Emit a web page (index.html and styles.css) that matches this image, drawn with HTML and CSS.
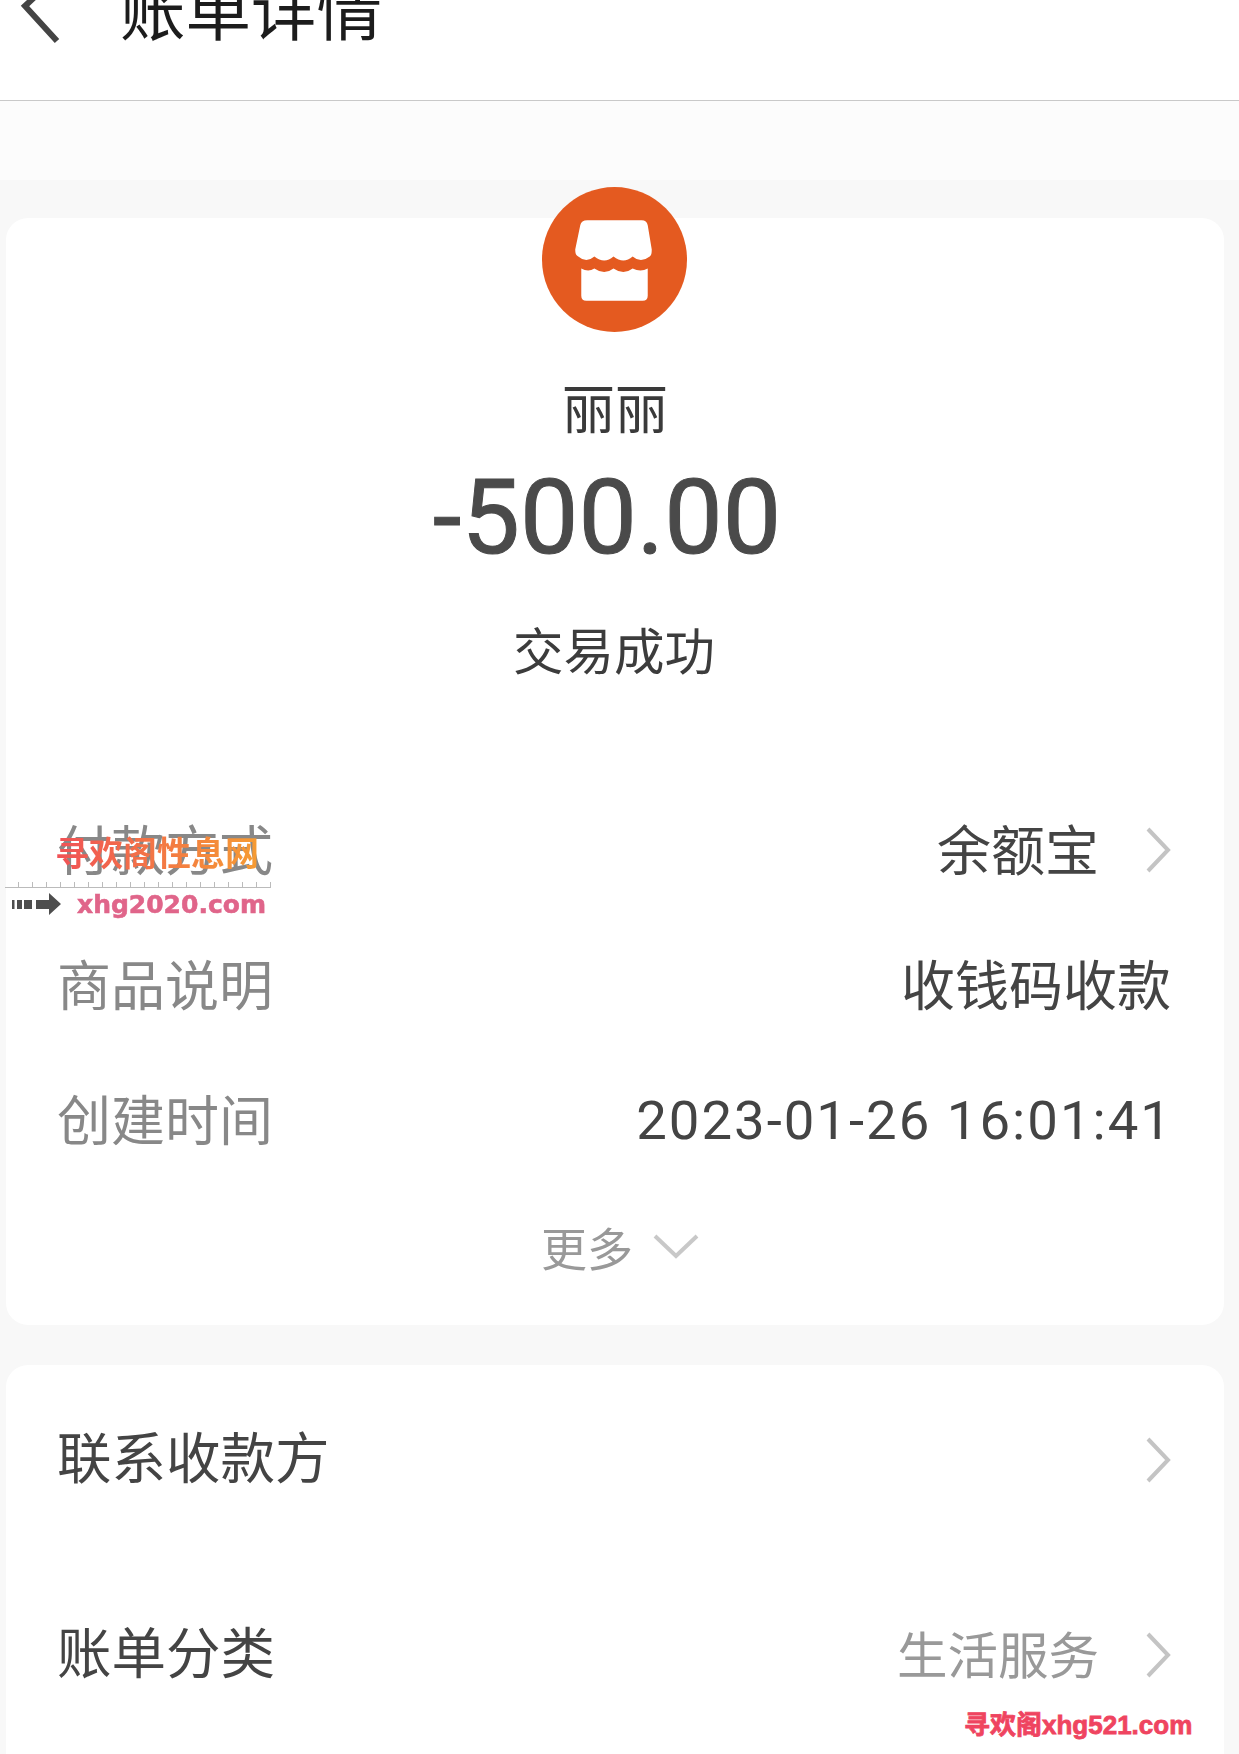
FILE: index.html
```html
<!DOCTYPE html>
<html lang="zh-CN">
<head>
  <meta charset="UTF-8" />
  <meta name="viewport" content="width=device-width, initial-scale=1.0" />
  <title>账单详情</title>
  <link rel="stylesheet" href="styles.css">
</head>
<body>
  <div class="page">
    <header class="topbar">
      <svg class="back" viewBox="0 0 40 70" aria-hidden="true"><path d="M37 2 L5 32 L37 67" /></svg>
      <h1>账单详情</h1>
    </header>
    <div class="band"></div>

    <main class="content">
      <section class="card card-main">
        <div class="avatar">
          <svg viewBox="0 0 144 144" aria-hidden="true">
            <circle cx="72" cy="72" r="72" fill="#e45a20" />
            <path fill="#fff" d="M45 33 H99 Q104 33 105 38 L109 62 Q109 68 107 69 Q98 76 90 69 Q81 77 71 69 Q62 77 52 69 Q44 76 36 69 Q33 68 33 62 L38 38 Q39 33 45 33 Z" />
            <path fill="#fff" d="M39 81 Q46 85 52 81 Q62 88 71 81 Q81 88 90 81 Q98 85 105 81 V108 Q105 113 100 113 H44 Q39 113 39 108 Z" />
          </svg>
        </div>
        <div class="payee">丽丽</div>
        <div class="amount">-500.00</div>
        <div class="status">交易成功</div>

        <div class="rows">
          <div class="row">
            <span class="label">付款方式</span>
            <span class="value with-arrow">余额宝
              <svg class="chevron chevron-low" viewBox="0 0 26 46" aria-hidden="true"><path d="M3 2 L23 23 L3 44" /></svg>
            </span>
          </div>
          <div class="row">
            <span class="label">商品说明</span>
            <span class="value">收钱码收款</span>
          </div>
          <div class="row">
            <span class="label">创建时间</span>
            <span class="value date">2023-01-26 16:01:41</span>
          </div>
        </div>

        <div class="more">更多
          <svg class="chevron-down" viewBox="0 0 46 26" aria-hidden="true"><path d="M2 3 L23 23 L44 3" /></svg>
        </div>
      </section>

      <section class="card card-links">
        <div class="link-row">
          <span class="title">联系收款方</span>
          <svg class="chevron" viewBox="0 0 26 46" aria-hidden="true"><path d="M3 2 L23 23 L3 44" /></svg>
        </div>
        <div class="link-row">
          <span class="title">账单分类</span>
          <span class="value muted with-arrow"><span class="muted-text">生活服务</span>
            <svg class="chevron" viewBox="0 0 26 46" aria-hidden="true"><path d="M3 2 L23 23 L3 44" /></svg>
          </span>
        </div>
      </section>
    </main>

    <!-- watermarks stamped over the screenshot -->
    <div class="stamp">
      <div class="stamp-cn">寻欢阁性息网</div>
      <div class="stamp-rule"></div>
      <div class="stamp-url">
        <svg class="stamp-arrow" viewBox="0 0 50 22" aria-hidden="true">
          <path d="M0 7 H2.500 V16 H0 Z M5 7 H10 V16 H5 Z M12 7 H20 V16 H12 Z M24 7 H37 V0 L49 11 L37 22 V16 H24 Z" />
        </svg>
        <span>xhg2020.com</span>
      </div>
    </div>
    <div class="stamp-corner">寻欢阁xhg521.com</div>
  </div>
</body>
</html>
```

FILE: styles.css
```css
* {
  box-sizing: border-box;
}
html, body {
  margin: 0;
  height: 100%;
}
body {
  background: #f8f8f8;
  font-family: "Noto Sans CJK SC", "Noto Sans", sans-serif;
  color: #3c3c3c;
  overflow: hidden;
}
.page {
  position: relative;
  width: 1239px;
  height: 1754px;
  overflow: hidden;
  filter: blur(0.5px);
}

/* top bar, cut off by the top of the picture */
.topbar {
  height: 101px;
  background: #fff;
  border-bottom: 1px solid #c9c9c9;
  display: flex;
  align-items: flex-end;
  padding: 0 0 56px 20px;
}
.back {
  width: 40px;
  height: 70px;
  flex: none;
  fill: none;
  stroke: #444;
  stroke-width: 6;
}
.topbar h1 {
  margin: 0 0 2px 60px;
  font-size: 65.500px;
  line-height: 70px;
  font-weight: 400;
  color: #1c1c1c;
  white-space: nowrap;
}
.band {
  height: 79px;
  background: #fcfcfc;
}

.content {
  padding: 38px 15px 0 6px;
  display: flex;
  flex-direction: column;
  gap: 40px;
}
.card {
  background: #fff;
  border-radius: 22px;
}
.card-main {
  height: 1107px;
  display: flex;
  flex-direction: column;
  align-items: center;
}

.avatar {
  width: 145px;
  height: 145px;
  margin: -31px 2px 0 0;
}
.avatar svg {
  display: block;
  width: 145px;
  height: 145px;
}
.payee {
  margin-top: 38px;
  font-size: 53px;
  line-height: 72px;
  color: #3a3a3a;
}
.amount {
  margin-top: 16px;
  margin-left: -16px;
  font-family: Roboto, "Liberation Sans", sans-serif;
  font-size: 104px;
  line-height: 120px;
  color: #4a4a4a;
  -webkit-text-stroke: 1px #4a4a4a;
}
.status {
  margin-top: 34px;
  margin-right: 2px;
  font-size: 50.500px;
  line-height: 72px;
}

.rows {
  width: 100%;
  margin-top: 96px;
  padding: 0 53px 0 51px;
}
.row {
  height: 135px;
  display: flex;
  align-items: center;
  justify-content: space-between;
}
.label {
  font-size: 54px;
  color: #888;
}
.value {
  font-size: 54px;
  color: #444;
}
.value.date {
  padding-top: 4px;
  margin-right: -2px;
  font-family: Roboto, "Liberation Sans", sans-serif;
  font-size: 54.500px;
  letter-spacing: 2px;
}
.value.muted {
  color: #999;
}
.muted-text {
  font-size: 50.500px;
  padding-bottom: 5px;
}
.with-arrow {
  display: flex;
  align-items: center;
  gap: 46px;
}
.chevron {
  width: 26px;
  height: 46px;
  flex: none;
  fill: none;
  stroke: #c4c4c4;
  stroke-width: 4;
}
.chevron-low {
  margin-top: 4px;
}

.more {
  margin-top: 28px;
  margin-left: 10px;
  display: flex;
  align-items: center;
  gap: 20px;
  font-size: 46px;
  line-height: 66px;
  color: #999;
}
.chevron-down {
  width: 46px;
  height: 26px;
  fill: none;
  stroke: #c8c8c8;
  stroke-width: 4;
}

.card-links {
  height: 420px;
  padding: 0 53px 0 51px;
}
.link-row {
  height: 195px;
  display: flex;
  align-items: center;
  justify-content: space-between;
}
.link-row:first-child {
  margin-top: -3px;
}
.title {
  padding-bottom: 10px;
  font-size: 54.500px;
  color: #444;
}

/* watermarks */
.stamp {
  position: absolute;
  left: 5px;
  top: 829px;
  width: 266px;
}
.stamp-cn {
  padding-left: 50px;
  font-size: 34px;
  line-height: 46px;
  font-weight: 700;
  white-space: nowrap;
  background: linear-gradient(90deg, #ef3f60, #f6a030);
  -webkit-background-clip: text;
  background-clip: text;
  color: transparent;
}
.stamp-rule {
  height: 13px;
  border-bottom: 1px solid #bbb;
  background: repeating-linear-gradient(90deg, transparent 0 13px, #bbb 13px 14px) bottom / 100% 5px no-repeat;
}
.stamp-url {
  display: flex;
  align-items: center;
  gap: 15px;
  padding-left: 7px;
  height: 32px;
}
.stamp-arrow {
  width: 50px;
  height: 22px;
  fill: #4e4e4e;
}
.stamp-url span {
  font-family: "DejaVu Sans", sans-serif;
  font-weight: 700;
  font-size: 25px;
  color: #e0658a;
  -webkit-text-stroke: 0.6px #e0658a;
}
.stamp-corner {
  position: absolute;
  left: 964px;
  top: 1708px;
  font-family: "Liberation Sans", "Noto Sans CJK SC", sans-serif;
  font-size: 26px;
  line-height: 34px;
  font-weight: 700;
  color: #ef4460;
  -webkit-text-stroke: 0.8px #ef4460;
  white-space: nowrap;
}
```
